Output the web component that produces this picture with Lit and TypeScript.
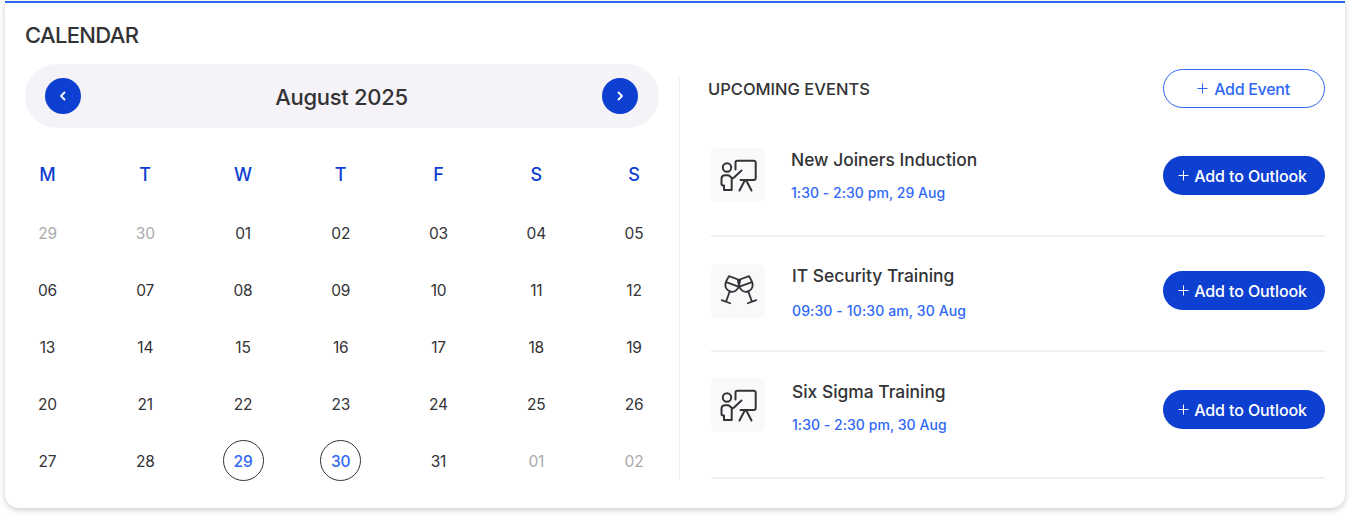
import { LitElement, html, css, svg } from "lit";
import { customElement } from "lit/decorators.js";

const presenter = svg`<svg class="ic" viewBox="0 0 54 54" fill="none" stroke="#333336" stroke-width="2" stroke-linecap="round" stroke-linejoin="round">
  <path d="M24.500 21.500V14.500a1.800 1.800 0 0 1 1.800-1.800h16.600a1.800 1.800 0 0 1 1.800 1.800v15.700a1.800 1.800 0 0 1-1.800 1.800H29.500"/>
  <circle cx="16" cy="19.500" r="4.200"/>
  <path d="M30.500 22.500 23 29.500c-1 .9-2 .8-2.800 0l-1-1c-.8-.8-1.500-1.200-2.700-1.200H14c-2.300 0-3.500 1.500-3.500 3.500v5c0 1 .7 1.700 1.500 1.700h1v4.500h7.700V31.500"/>
  <path d="M34 32l-5.500 10.500M35 32l5.500 10.500"/>
</svg>`;
const glass = svg`
    <path d="M-4.500 0h9M0 0V-11"/>
    <path d="M-6-25h12l.8 6c.5 4-2.300 8-6.800 8s-7.300-4-6.800-8z"/>
    <path d="M-6.500-18.500h13"/>`;
const glasses = svg`<svg class="ic" viewBox="0 0 54 54" fill="none" stroke="#333336" stroke-width="1.800" stroke-linecap="round" stroke-linejoin="round">
  <g transform="translate(15 37.700) rotate(20)">${glass}</g>
  <g transform="translate(41 37.700) rotate(-20)">${glass}</g>
</svg>`;

const rows: [string, string][][] = [
  [["29","m"],["30","m"],["01",""],["02",""],["03",""],["04",""],["05",""]],
  [["06",""],["07",""],["08",""],["09",""],["10",""],["11",""],["12",""]],
  [["13",""],["14",""],["15",""],["16",""],["17",""],["18",""],["19",""]],
  [["20",""],["21",""],["22",""],["23",""],["24",""],["25",""],["26",""]],
  [["27",""],["28",""],["29","s"],["30","s"],["31",""],["01","m"],["02","m"]],
];
const events = [
  { k: "r1", t: "New Joiners Induction", d: "1:30 - 2:30 pm, 29 Aug", i: presenter },
  { k: "r2", t: "IT Security Training", d: "09:30 - 10:30 am, 30 Aug", i: glasses },
  { k: "r3", t: "Six Sigma Training", d: "1:30 - 2:30 pm, 30 Aug", i: presenter },
];

@customElement("app-root")
export class AppRoot extends LitElement {
  static styles = css`
    :host { display: block; width: 1350px; height: 516px; background: #fff; font-family: "Inter", "Liberation Sans", sans-serif; color: #333336; overflow: hidden; }
    .page { padding: 1px 5px 0; }
    .card { height: 507px; box-sizing: border-box; border-top: 2px solid #2f66ee; border-radius: 0 0 14px 14px; background: #fff; box-shadow: 0 2px 6px rgba(0,0,0,.2); padding: 19px 20px 0; }
    h1 { margin: 0; font-size: 22px; line-height: 26px; font-weight: 500; letter-spacing: -.65px; color: #333336; }
    .cols { display: flex; margin-top: 16px; }
    .left { width: 634px; flex: none; }
    .mh { height: 64px; border-radius: 32px; background: #f5f3f7; display: flex; align-items: center; justify-content: space-between; padding: 0 21px 0 20px; }
    .nav { width: 36px; height: 36px; border-radius: 50%; background: #0d3fd0; display: flex; align-items: center; justify-content: center; }
    .nav svg { width: 12px; height: 12px; }
    .mt { font-size: 22px; line-height: 28px; padding-top: 2px; font-weight: 500; letter-spacing: -.3px; color: #333336; }
    .grid { display: grid; grid-template-columns: repeat(7, 41px); justify-content: space-between; padding: 0 4.500px 0 2px; row-gap: 16px; margin-top: 26px; }
    .h { height: 42px; box-sizing: border-box; padding-bottom: 1px; display: flex; align-items: center; justify-content: center; color: #0d3fd0; font-size: 18px; font-weight: 500; }
    .c { height: 41px; box-sizing: border-box; padding-top: 2px; display: flex; align-items: center; justify-content: center; font-size: 15.500px; color: #333336; letter-spacing: -.2px; }
    .m { color: #a9a9ad; }
    .s { border: 1px solid #333336; border-radius: 50%; color: #2f68f5; font-weight: 500; }
    .right { margin-left: 20px; flex: 1; border-left: 1px solid #ececee; margin-top: 14px; height: 402px; padding-left: 28px; }
    .rh { display: flex; align-items: center; justify-content: space-between; margin-top: -9px; height: 39px; }
    .rh h2 { margin: 0; font-size: 16.500px; font-weight: 500; color: #333336; }
    .btn { box-sizing: border-box; height: 39px; width: 162px; border-radius: 20px; display: flex; align-items: center; justify-content: center; gap: 5px; font-size: 16px; font-weight: 500; letter-spacing: -.1px; white-space: nowrap; flex: none; padding-right: 3px; }
    .btn svg { width: 11px; height: 11px; }
    .out { border: 1px solid #2f66ee; color: #2f68f5; background: #fff; letter-spacing: -.3px; padding-right: 1px; gap: 6px; }
    .fill { background: #0d3fd0; color: #fff; }
    .ev { margin-left: 3px; border-bottom: 2px solid #f0f0f1; display: flex; align-items: flex-start; box-sizing: border-box; }
    .r1 { margin-top: 40px; height: 89px; }
    .r2 { margin-top: 27px; height: 88px; }
    .r3 { margin-top: 26px; height: 101px; }
    .box { width: 54px; height: 54px; border-radius: 6px; background: #faf8fb; flex: none; }
    .ic { display: block; width: 54px; height: 54px; }
    .txt { flex: 1; margin-left: 26px; }
    .r2 .txt { margin-left: 27px; }
    .r3 .txt { margin-left: 27px; padding-top: 2px; }
    .t { font-size: 17.400px; line-height: 24px; font-weight: 500; color: #333336; }
    .d { font-size: 14px; line-height: 20px; font-weight: 500; letter-spacing: .04px; color: #2f68f5; margin-top: 11px; }
    .r2 .d { margin-top: 13px; letter-spacing: .12px; }
    .r1 .btn { margin-top: 8px; }
    .r2 .btn { margin-top: 7px; }
    .r3 .btn { margin-top: 12px; }
  `;

  private plus(c: string) {
    return svg`<svg viewBox="0 0 11 11" fill="none" stroke="${c}" stroke-width="1"><path d="M5.500 .5v10M.5 5.500h10"/></svg>`;
  }

  render() {
    return html`<div class="page"><div class="card">
      <h1>CALENDAR</h1>
      <div class="cols">
        <div class="left">
          <div class="mh">
            <div class="nav"><svg viewBox="0 0 12 12" fill="none" stroke="#fff" stroke-width="1.800" stroke-linecap="round" stroke-linejoin="round"><path d="M7.500 2.500 4 6l3.500 3.500"/></svg></div>
            <div class="mt">August 2025</div>
            <div class="nav"><svg viewBox="0 0 12 12" fill="none" stroke="#fff" stroke-width="1.800" stroke-linecap="round" stroke-linejoin="round"><path d="M4.500 2.500 8 6l-3.500 3.500"/></svg></div>
          </div>
          <div class="grid">
            ${["M","T","W","T","F","S","S"].map((d) => html`<div class="h">${d}</div>`)}
            ${rows.flat().map(([n, k]) => html`<div class="c ${k}">${n}</div>`)}
          </div>
        </div>
        <div class="right">
          <div class="rh"><h2>UPCOMING EVENTS</h2><div class="btn out">${this.plus("#2f66ee")}Add Event</div></div>
          ${events.map((e) => html`<div class="ev ${e.k}">
            <div class="box">${e.i}</div>
            <div class="txt"><div class="t">${e.t}</div><div class="d">${e.d}</div></div>
            <div class="btn fill">${this.plus("#fff")}Add to Outlook</div>
          </div>`)}
        </div>
      </div>
    </div></div>`;
  }
}
